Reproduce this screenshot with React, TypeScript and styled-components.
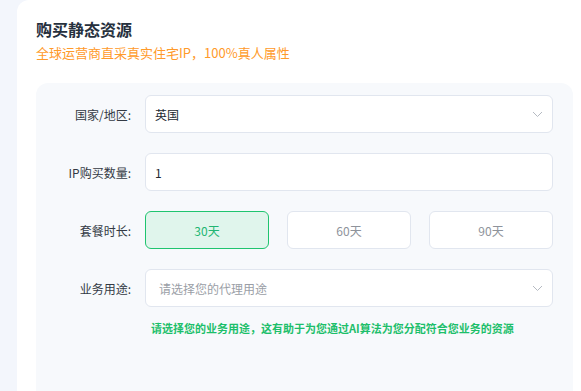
import React from "react";
import styled, { createGlobalStyle } from "styled-components";

const Global = createGlobalStyle`
  html, body { margin: 0; padding: 0; background: #f3f6fc; }
  body { font-family: "Noto Sans CJK SC", "Noto Sans", sans-serif; overflow: hidden; }
  * { box-sizing: border-box; }
`;

const Card = styled.div`
  margin-left: 17px;
  width: 580px;
  min-height: 420px;
  background: #ffffff;
  border-radius: 12px 0 0 0;
  padding: 17px 0 0 19px;
`;

const Title = styled.h1`
  margin: 0;
  font-size: 16px;
  line-height: 24px;
  font-weight: 700;
  color: #26303d;
`;

const Subtitle = styled.p`
  margin: 2px 0 0;
  font-size: 13px;
  line-height: 20px;
  color: #ff9a2a;
`;

const Panel = styled.div`
  margin-top: 20px;
  width: 537px;
  min-height: 320px;
  background: #f7f9fc;
  border-radius: 12px;
  padding: 12px 20px 0 0;
  display: flex;
  flex-direction: column;
  gap: 20px;
`;

const Row = styled.div`
  display: flex;
  align-items: center;
`;

const Label = styled.div`
  width: 95px;
  margin-right: 14px;
  text-align: right;
  font-size: 12px;
  color: #333a44;
`;

const Field = styled.div<{ $placeholder?: boolean }>`
  flex: 1;
  height: 38px;
  background: #fff;
  border: 1px solid #e1e6ef;
  border-radius: 6px;
  display: flex;
  align-items: center;
  justify-content: space-between;
  padding: 0 9px 0 ${(p) => (p.$placeholder ? "13px" : "9px")};
  font-size: 12px;
  color: ${(p) => (p.$placeholder ? "#9a9ea6" : "#222831")};
`;

const Options = styled.div`
  flex: 1;
  display: grid;
  grid-template-columns: repeat(3, 1fr);
  gap: 18px;
`;

const Option = styled.div<{ $active?: boolean }>`
  height: 38px;
  border-radius: 6px;
  display: flex;
  align-items: center;
  justify-content: center;
  font-size: 12px;
  background: ${(p) => (p.$active ? "#e0f5ec" : "#ffffff")};
  border: 1px solid ${(p) => (p.$active ? "#1fc46f" : "#e1e6ef")};
  color: ${(p) => (p.$active ? "#22b573" : "#8e939b")};
`;

const Hint = styled.div`
  margin: -7px 0 0 115px;
  font-size: 11px;
  font-weight: 700;
  color: #1dbf6b;
`;

const Chevron = () => (
  <svg width="11" height="7" viewBox="0 0 11 7" fill="none">
    <path d="M1 1 L5.5 5.5 L10 1" stroke="#b5bac2" strokeWidth="1" />
  </svg>
);

export default function App() {
  return (
    <>
      <Global />
      <Card>
        <Title>购买静态资源</Title>
        <Subtitle>全球运营商直采真实住宅IP，100%真人属性</Subtitle>
        <Panel>
          <Row>
            <Label>国家/地区:</Label>
            <Field>
              <span>英国</span>
              <Chevron />
            </Field>
          </Row>
          <Row>
            <Label>IP购买数量:</Label>
            <Field>
              <span>1</span>
            </Field>
          </Row>
          <Row>
            <Label>套餐时长:</Label>
            <Options>
              <Option $active>30天</Option>
              <Option>60天</Option>
              <Option>90天</Option>
            </Options>
          </Row>
          <Row>
            <Label>业务用途:</Label>
            <Field $placeholder>
              <span>请选择您的代理用途</span>
              <Chevron />
            </Field>
          </Row>
          <Hint>请选择您的业务用途，这有助于为您通过AI算法为您分配符合您业务的资源</Hint>
        </Panel>
      </Card>
    </>
  );
}
